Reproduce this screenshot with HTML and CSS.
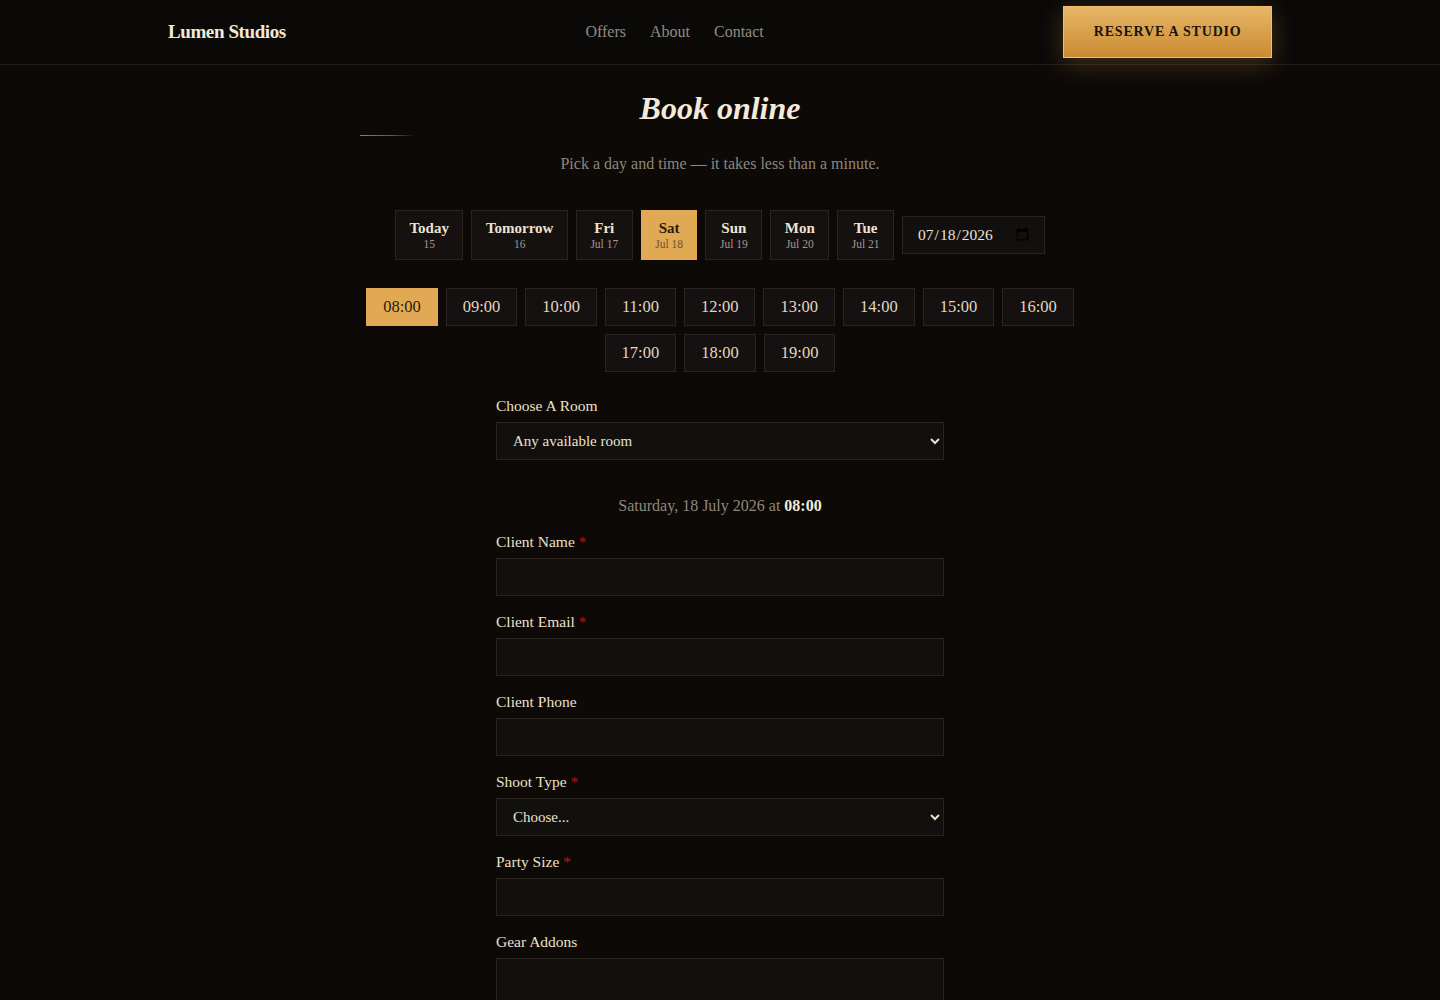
FILE: index.html
```html
<!DOCTYPE html>
<html lang="en">

<head>
    <meta charset="UTF-8">
    <meta name="viewport" content="width=device-width, initial-scale=1.0">
    <title>Book online - Lumen Studios</title>
    <link rel="stylesheet" href="styles.css">
</head>

<body>
    <header class="site-header">
        <div class="header-inner">
            <a class="logo" href="#">Lumen Studios</a>
            <nav class="nav">
                <a href="#">Offers</a>
                <a href="#">About</a>
                <a href="#">Contact</a>
            </nav>
            <a class="btn-reserve" href="#">Reserve a studio</a>
        </div>
    </header>

    <main class="booking">
        <h1 class="title">Book online</h1>
        <div class="rule"></div>
        <p class="lead">Pick a day and time — it takes less than a minute.</p>

        <div class="days">
            <button class="day"><span class="day-name">Today</span><span class="day-date">15</span></button>
            <button class="day"><span class="day-name">Tomorrow</span><span class="day-date">16</span></button>
            <button class="day"><span class="day-name">Fri</span><span class="day-date">Jul 17</span></button>
            <button class="day active"><span class="day-name">Sat</span><span class="day-date">Jul 18</span></button>
            <button class="day"><span class="day-name">Sun</span><span class="day-date">Jul 19</span></button>
            <button class="day"><span class="day-name">Mon</span><span class="day-date">Jul 20</span></button>
            <button class="day"><span class="day-name">Tue</span><span class="day-date">Jul 21</span></button>
            <input class="date-input" type="date" value="2026-07-18">
        </div>

        <div class="slots">
            <button class="slot active">08:00</button>
            <button class="slot">09:00</button>
            <button class="slot">10:00</button>
            <button class="slot">11:00</button>
            <button class="slot">12:00</button>
            <button class="slot">13:00</button>
            <button class="slot">14:00</button>
            <button class="slot">15:00</button>
            <button class="slot">16:00</button>
            <button class="slot">17:00</button>
            <button class="slot">18:00</button>
            <button class="slot">19:00</button>
        </div>

        <form class="form">
            <div class="field">
                <label>Choose A Room</label>
                <select class="control">
                    <option>Any available room</option>
                </select>
            </div>

            <p class="summary">Saturday, 18 July 2026 at <strong>08:00</strong></p>

            <div class="field">
                <label>Client Name <span class="req">*</span></label>
                <input class="control" type="text">
            </div>
            <div class="field">
                <label>Client Email <span class="req">*</span></label>
                <input class="control" type="email">
            </div>
            <div class="field">
                <label>Client Phone</label>
                <input class="control" type="tel">
            </div>
            <div class="field">
                <label>Shoot Type <span class="req">*</span></label>
                <select class="control">
                    <option>Choose...</option>
                </select>
            </div>
            <div class="field">
                <label>Party Size <span class="req">*</span></label>
                <input class="control" type="number">
            </div>
            <div class="field">
                <label>Gear Addons</label>
                <textarea class="control area"></textarea>
            </div>
        </form>
    </main>
</body>

</html>
```

FILE: styles.css
```css
body {
    margin: 0;
    background: #0c0907;
    color: #ece0cb;
    font-family: 'Liberation Serif', 'DejaVu Serif', serif;
    font-size: 15px;
}

a {
    text-decoration: none;
    color: inherit;
}

/* header */
.site-header {
    background: #0a0908;
    border-bottom: 1px solid #1f1b17;
}

.header-inner {
    max-width: 1104px;
    margin: 0 auto;
    height: 64px;
    display: flex;
    align-items: center;
    justify-content: space-between;
}

.logo {
    font-size: 19px;
    font-weight: bold;
    letter-spacing: -0.4px;
    color: #f2e8d8;
}

.nav {
    display: flex;
    gap: 24px;
}

.nav a {
    font-size: 16px;
    color: #948b80;
}

.btn-reserve {
    display: flex;
    align-items: center;
    height: 50px;
    padding: 0 29.5px;
    background: linear-gradient(#e8b668, #c98b30);
    border: 1px solid #efbf6f;
    color: #1c1409;
    font-size: 14px;
    font-weight: bold;
    letter-spacing: 0.8px;
    text-transform: uppercase;
    box-shadow: 0 6px 26px rgba(214, 150, 60, 0.28);
}

/* booking */
.booking {
    max-width: 720px;
    margin: 0 auto;
    padding: 27px 0 60px;
}

.title {
    margin: 0;
    text-align: center;
    font-size: 32px;
    line-height: 32px;
    font-style: italic;
    font-weight: bold;
    color: #f4eadb;
}

.rule {
    width: 56px;
    height: 1px;
    margin-top: 11px;
    background: linear-gradient(90deg, #b87a1c, #7a5014 60%, rgba(90, 60, 20, 0));
}

.lead {
    margin: 18px 0 36px;
    text-align: center;
    font-size: 16px;
    line-height: 20px;
    color: #8f877c;
}

.days {
    display: flex;
    justify-content: center;
    align-items: center;
    gap: 8px;
    margin-bottom: 28px;
}

.day {
    display: flex;
    flex-direction: column;
    align-items: center;
    justify-content: center;
    height: 50px;
    padding: 0 13.5px;
    background: #141110;
    border: 1px solid #2a2520;
    color: #efe3cf;
    font-family: inherit;
    cursor: pointer;
}

.day-name {
    font-size: 15px;
    font-weight: bold;
    line-height: 17px;
}

.day-date {
    font-size: 11.5px;
    line-height: 14px;
    color: #a39a8e;
}

.day.active {
    background: #e2a954;
    border-color: #e2a954;
    color: #2a1c0a;
}

.day.active .day-date {
    color: #6e5129;
}

.date-input {
    height: 38px;
    box-sizing: border-box;
    padding: 0 12px 0 14px;
    background: #12100e;
    border: 1px solid #2a2520;
    color: #efe3cf;
    font-family: inherit;
    font-size: 15.5px;
    width: 143px;
}

.slots {
    display: flex;
    flex-wrap: wrap;
    justify-content: center;
    gap: 8px;
    margin-bottom: 24px;
}

.slot {
    height: 38px;
    padding: 0 16px;
    background: #141110;
    border: 1px solid #2a2520;
    color: #e3d6c0;
    font-family: inherit;
    font-size: 16.5px;
    cursor: pointer;
}

.slot.active {
    background: #e2a954;
    border-color: #e2a954;
    color: #2a1c0a;
}

/* form */
.form {
    width: 448px;
    margin: 0 auto;
    display: flex;
    flex-direction: column;
    gap: 16px;
}

.field {
    display: flex;
    flex-direction: column;
}

.field label {
    font-size: 15.5px;
    line-height: 20px;
    margin-bottom: 6px;
    color: #ece0cb;
}

.req {
    color: #c0141c;
}

.control {
    box-sizing: border-box;
    height: 38px;
    padding: 0 12px;
    background: #12100e;
    border: 1px solid #2a2520;
    border-radius: 0;
    color: #ece0cb;
    font-family: inherit;
    font-size: 15px;
}

.area {
    height: 90px;
    resize: vertical;
}

.summary {
    margin: 20px 0 0;
    text-align: center;
    font-size: 16px;
    line-height: 20px;
    color: #8f877c;
}

.summary strong {
    color: #f4eadb;
}
```
